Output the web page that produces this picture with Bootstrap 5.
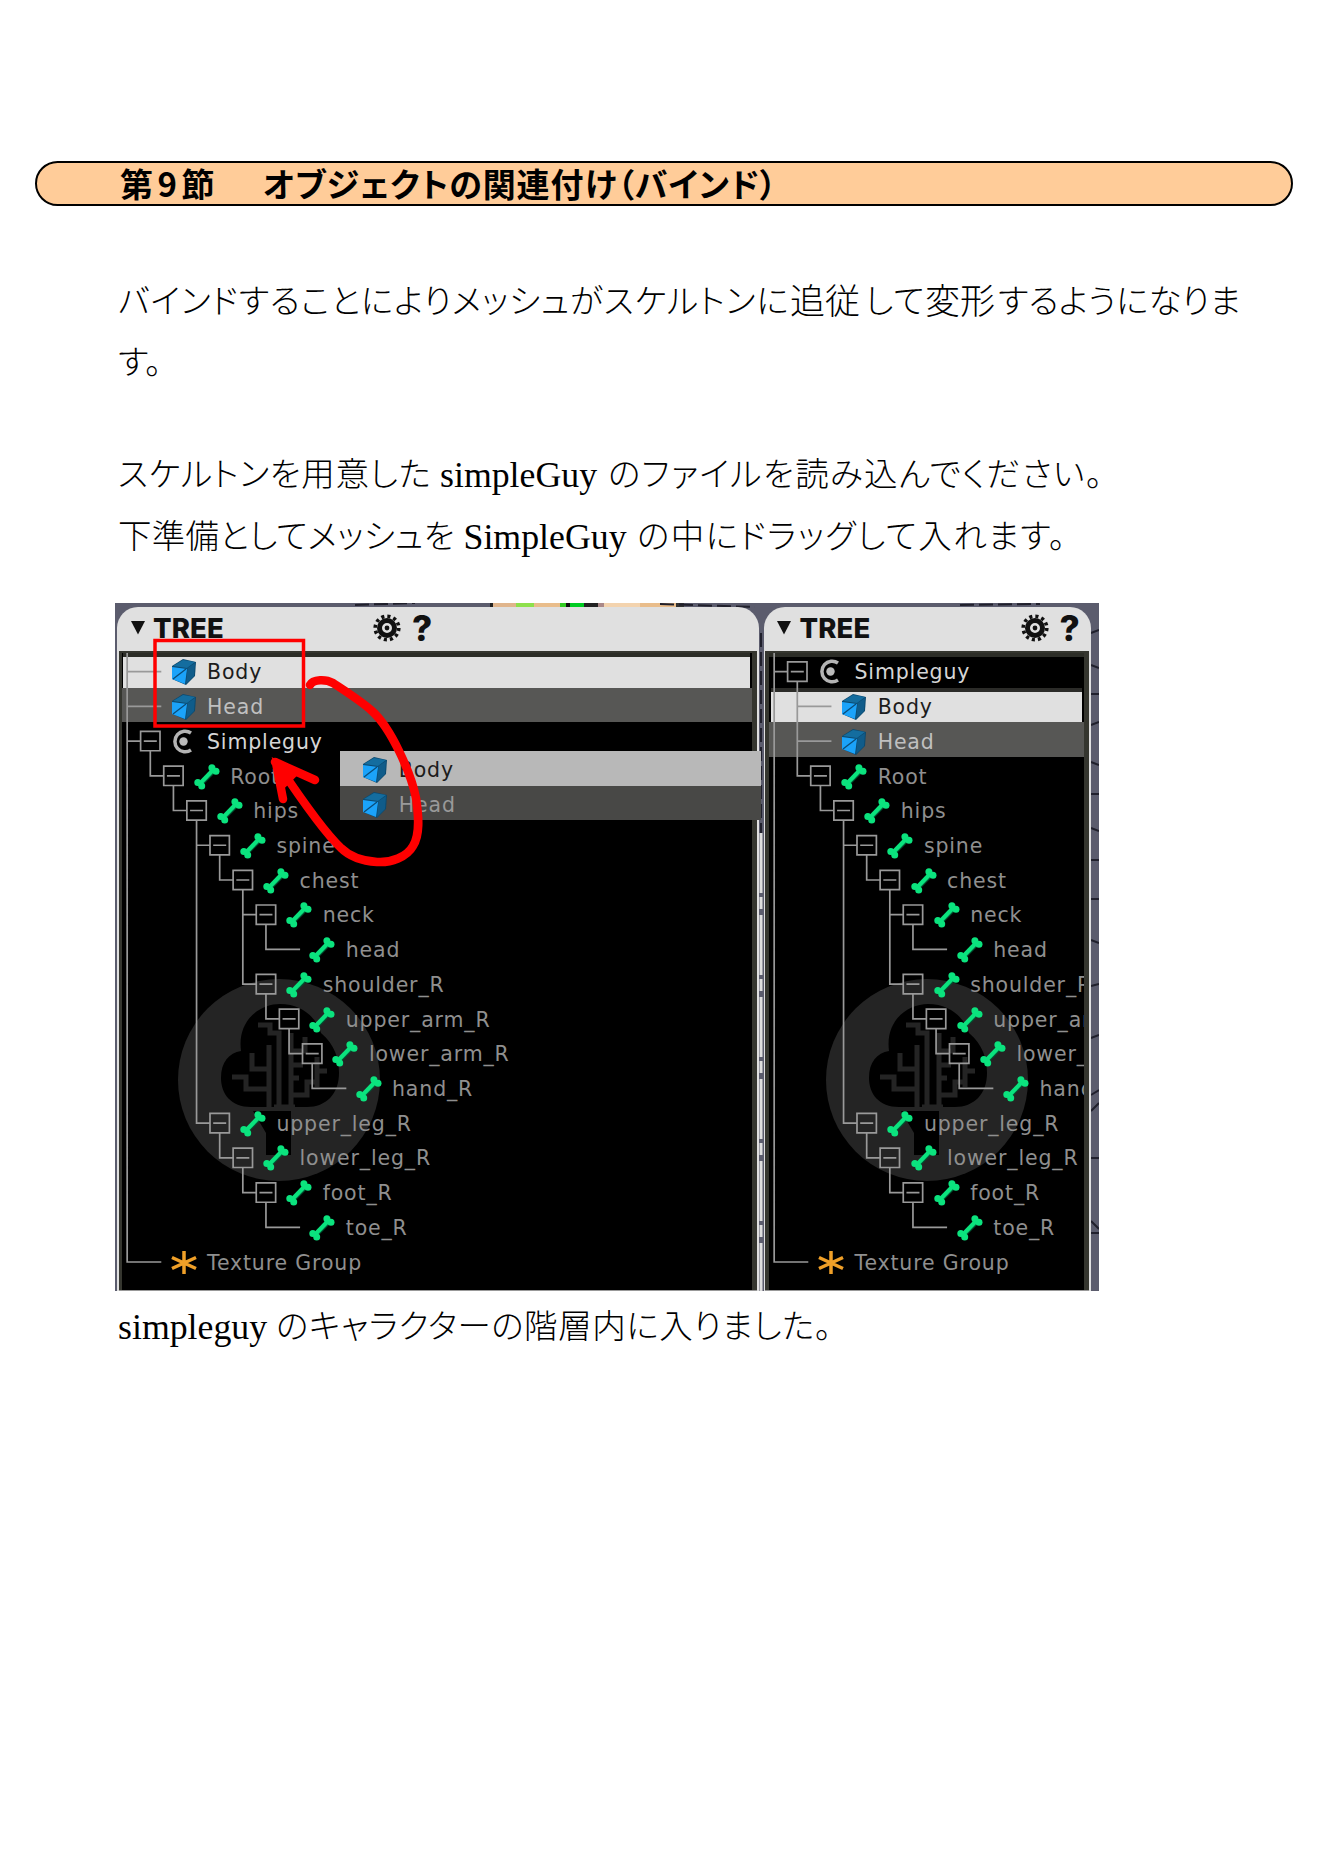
<!DOCTYPE html>
<html lang="ja">
<head>
<meta charset="utf-8">
<meta name="viewport" content="width=device-width, initial-scale=1">
<title>第9節 オブジェクトの関連付け（バインド）</title>
<link href="https://cdn.jsdelivr.net/npm/bootstrap@5.3.0/dist/css/bootstrap.min.css" rel="stylesheet">
<style>
  body { background:#fff; color:#000; width:1328px; height:1875px; overflow:hidden; }
  .sheet { padding-top:161px; }
  .section-bar { margin-left:35px; width:1258px; height:45px; border:2px solid #000; border-radius:23px; background:#fc9;
    padding-left:83px; font:700 33px/40px "Noto Sans CJK JP",sans-serif; font-feature-settings:"palt"; }
  .prose { padding-left:118px; }
  .txt-line { height:61.5px; font:300 33.5px/56.5px "Noto Sans CJK JP",sans-serif; font-feature-settings:"palt"; white-space:nowrap; }
  .seg { text-align:justify; text-align-last:justify; flex:none; letter-spacing:-1.5px; }
  .kj { font-size:35px; letter-spacing:0; font-feature-settings:normal; text-align-last:left; }
  .lat { font:35.8px/63.5px "Liberation Serif",serif; flex:none; }
  .shot { margin-left:115px; width:984px; height:688px; padding:4px 0 0 2px; overflow:hidden; background:#5b5c6d; position:relative; }
  .shot-top { left:375px; top:0; width:194px; height:5px; background:linear-gradient(90deg,#222 0 3px,#e0b58c 3px 26px,#8ee04c 26px 44px,#e9bd8b 44px 70px,#3c2 70px 76px,#111 76px 80px,#0c2 80px 94px,#222 94px 108px,#a88 108px 114px,#f3d3ae 114px 150px,#e9bd8b 150px 186px,#333 186px); }
  .shot-noise { left:0; top:0; }
  .panel { height:684px; border-radius:21px 21px 0 0; background:#e0e0e0; position:relative; flex:none; }
  .panel-a { width:642px; } .panel-b { width:327.5px; margin-left:4.5px; }
  .panel-head { height:44px; padding-left:13.5px; padding-bottom:2px; }
  .panel-title { font:800 27.5px/42px Inter,sans-serif; letter-spacing:.1px; color:#111; margin-left:8.5px; width:220px; flex:none; }
  .panel-b .panel-title { width:auto; flex:1 1 auto; }
  .qmark { font:800 35px/44px Inter,sans-serif; color:#111; margin-left:11px; width:26px; }
  .well { background:#35362f; height:640px; padding:2px 5px 0 3px; margin:0 2px 0 1.5px; border-bottom:1px solid #999; }
  .panel-b .well { padding-left:4px; }
  .tree { background:#000; height:637px; overflow:hidden; position:relative; }
  .wires, .logo { position:absolute; left:0; top:0; }
  .wires { z-index:2; }
  .node { height:34.73px; border-top:4px solid transparent; position:relative; z-index:1; font:20.5px/30px "DejaVu Sans",sans-serif; letter-spacing:.85px; color:#8f8f8f; white-space:nowrap; }
  .node svg { width:28px; height:28px; flex:none; margin-right:9.5px; overflow:visible; }
  .node:first-of-type { border-top-color:#2c2d27; }
  .on { background:#e0e0e0; color:#1c1c1c; border-top-color:#2b2b28; margin:0 2.5px 0 1.5px; padding-right:0; }
  .on svg { margin-left:-1.5px; margin-right:9.5px; }
  .on2 { background:#575755; border-top-color:#575755; color:#c0c0c0; }
  .bright { color:#d6d6d6; }
  .ghost { position:absolute; left:223px; top:144px; width:421px; z-index:4; }
  .ghost .node { padding-left:21.3px; }
  .ghost .on { margin:0; background:#b8b8b8; border-top-color:#b8b8b8; }
  .ghost .on svg { margin-left:0; }
  .ghost .on2 { background:#484846; border-top-color:#484846; color:#999; }
  .marks { position:absolute; left:0; top:0; z-index:5; }
</style>
<script src="https://cdn.jsdelivr.net/npm/bootstrap@5.3.0/dist/js/bootstrap.bundle.min.js"></script>
</head>
<body>
<svg width="0" height="0" class="position-absolute">
  <symbol id="cube" viewBox="0 0 28 28"><path d="M2 8L13 1 26 4 25 18 16 27 2 21Z" fill="#0c4a70"/><path d="M3 8L13 2 25 4 17 10Z" fill="#146d9f"/><path d="M17.500 10L25 5 24 18 16 26Z" fill="#105c8a"/><path d="M2 9L17 11 15 26 2 21Z" fill="#1ba3fa"/><path d="M3 21L16 11" stroke="#0b4c78" stroke-width="1.300"/></symbol>
  <symbol id="bone" viewBox="0 0 28 28"><g transform="translate(1 1)" fill="#053" stroke="#053"><path d="M7 20L20 7" stroke-width="4"/></g><g fill="#0be37e" stroke="#0be37e"><path d="M7 20.500L20 7" stroke-width="4.200"/><g stroke="none"><circle cx="4.800" cy="19.500" r="3.500"/><circle cx="8.700" cy="23" r="3.500"/><circle cx="18.900" cy="4.800" r="3.500"/><circle cx="23" cy="8.300" r="3.500"/></g></g></symbol>
  <symbol id="cee" viewBox="0 0 28 28"><path d="M22.500 5A10.300 10.300 0 1 0 22.500 22" fill="none" stroke="#b4b4b4" stroke-width="3.500" transform="translate(-1.500 0)"/><circle cx="13.500" cy="13.500" r="4.200" fill="#bbb"/></symbol>
  <symbol id="star" viewBox="0 0 28 28"><path d="M14 2V25M2 8.500L26 19.500M26 8.500L2 19.500" stroke="#f0a028" stroke-width="3.500"/></symbol>
  <symbol id="gear" viewBox="0 0 28 28"><circle cx="14" cy="14" r="7.500" fill="none" stroke="#111" stroke-width="5"/><circle cx="14" cy="14" r="11.800" fill="none" stroke="#111" stroke-width="3.600" stroke-dasharray="3.100 3.078"/><circle cx="14" cy="14" r="2.400" fill="#111"/></symbol>
  <symbol id="brain" viewBox="0 0 210 210"><circle cx="104" cy="105" r="101" fill="#242424"/>
    <path d="M66 76C62 45 85 29 105 29C128 29 142 44 146 58C160 70 164 84 164 98C164 119 151 132 132 132H76C56 132 46 119 46 103C46 87 54 78 66 76Z" fill="#000"/>
    <path d="M116 136V180H91V158L78 136Z" fill="#000"/>
    <g fill="none" stroke="#242424" stroke-width="5"><path d="M83 50H95V58H104V132M94 70V132M77 78V94H94M57 102H71V114H94M116 58V132M116 76H130V62M116 90H128M116 103H124M116 120H132V107H142M142 82V112M142 96H152M99 132H120"/></g></symbol>
</svg>

<main class="sheet">
  <h1 class="section-bar d-flex mb-0"><span class="seg" style="width:93px">第9節</span><span class="seg" style="width:512px;margin-left:50px">オブジェクトの関連付け（バインド）</span></h1>

  <div class="prose" style="padding-top:64.5px">
    <p class="txt-line d-flex mb-0"><span class="seg" style="width:669px">バインドすることによりメッシュがスケルトンに</span><span class="seg kj" style="width:71px;margin-left:3px">追従</span><span class="seg" style="width:58px;margin-left:4px">して</span><span class="seg kj" style="width:71px;margin-left:2px">変形</span><span class="seg" style="width:241px;margin-left:2px">するようになりま</span></p>
    <p class="txt-line d-flex mb-0"><span>す。</span></p>
  </div>

  <div class="prose" style="padding-top:50.5px">
    <p class="txt-line d-flex mb-0"><span class="seg" style="width:311px">スケルトンを用意した</span><span class="lat" style="width:158px;margin-left:11px">simpleGuy</span><span class="seg" style="width:493px;margin-left:10px">のファイルを読み込んでください。</span></p>
    <p class="txt-line d-flex mb-0"><span class="seg" style="width:335px">下準備としてメッシュを</span><span class="lat" style="width:163px;margin-left:10.5px">SimpleGuy</span><span class="seg" style="width:427px;margin-left:10.5px">の中にドラッグして入れます。</span></p>
  </div>

  <figure class="shot d-flex mb-0" style="margin-top:36px">
    <div class="shot-top position-absolute"></div>
    <svg class="shot-noise position-absolute" width="984" height="688" fill="none" stroke="#20202c" stroke-width="2">
      <path d="M240 2L300 0M545 1L640 4M845 2L925 1M646 30V230" stroke-dasharray="14 5"/>
      <path d="M646 230V688" stroke="#ddd" stroke-width="3" stroke-dasharray="60 4 12 6"/>
      <path d="M976 30L984 27M976 62L984 65M976 91H984M976 122L984 119M976 159L984 162M976 191H984M976 225L984 228M976 257H984M976 296H984M976 337L984 340M976 383L984 381M976 435L984 432M976 492L984 487M976 508L984 500M976 555H984M976 618L984 626M976 630H984"/>
    </svg>
    <section class="panel panel-a">
      <header class="panel-head d-flex align-items-center">
        <svg width="14" height="14"><path d="M0 0H14L7 13.500Z" fill="#111"/></svg>
        <span class="panel-title">TREE</span>
        <svg width="28" height="28"><use href="#gear"/></svg><span class="qmark">?</span>
      </header>
      <div class="well"><div class="tree" id="treeA"></div></div>
      <div class="ghost">
        <div class="node on d-flex align-items-center" style="margin:0"><svg><use href="#cube"/></svg>Body</div>
        <div class="node on2 d-flex align-items-center"><svg><use href="#cube"/></svg>Head</div>
      </div>
    </section>
    <section class="panel panel-b">
      <header class="panel-head d-flex align-items-center">
        <svg width="14" height="14"><path d="M0 0H14L7 13.500Z" fill="#111"/></svg>
        <span class="panel-title">TREE</span>
        <svg width="28" height="28"><use href="#gear"/></svg><span class="qmark" style="margin-right:5.5px">?</span>
      </header>
      <div class="well"><div class="tree" id="treeB"></div></div>
    </section>
    <svg class="marks" width="984" height="688" fill="none" stroke="#f00">
      <rect x="40" y="37.500" width="148.500" height="85.500" stroke-width="3.500"/>
      <path d="M195 82C198 76 211 76 218 80C227 86 246 98 257 108C276 125 296 170 301 195C304 215 305 232 298 243C292 254 276 260 262 259C247 258 235 254 226 245C208 228 182 190 164 163M160 159L200 177M161 160L168 196" stroke-width="8.500" stroke-linecap="round" stroke-linejoin="round"/>
      <path d="M160 158L182 170L168 184Z" fill="#f00" stroke-width="4"/>
    </svg>
  </figure>

  <div class="prose" style="padding-top:4.500px">
    <p class="txt-line d-flex mb-0"><span class="lat" style="width:150px">simpleguy</span><span class="seg" style="width:554px;margin-left:8px">のキャラクターの階層内に入りました。</span></p>
  </div>
</main>

<script>
// Each node: [label, depth, icon, has children, extra class]
const bones = [
  ['Root',1,'bone',1],['hips',2,'bone',1],['spine',3,'bone',1],['chest',4,'bone',1],['neck',5,'bone',1],['head',6,'bone',0],
  ['shoulder_R',5,'bone',1],['upper_arm_R',6,'bone',1],['lower_arm_R',7,'bone',1],['hand_R',8,'bone',0],
  ['upper_leg_R',3,'bone',1],['lower_leg_R',4,'bone',1],['foot_R',5,'bone',1],['toe_R',6,'bone',0],['Texture Group',0,'star',0]];
const before = [['Body',0,'cube',0,'on'],['Head',0,'cube',0,'on2'],['Simpleguy',0,'cee',1,'bright'],...bones];
const after = [['Simpleguy',0,'cee',1,'bright'],['Body',1,'cube',0,'on'],['Head',1,'cube',0,'on2'],...bones];
const H = 34.73, STEP = 23.13;
function draw(id, rows) {
  const x = d => 28.3 + d * STEP, y = i => i * H + 18.6;
  let wires = '', html = '';
  rows.forEach(([label, d, icon, open, cls], i) => {
    let p = i - 1;
    while (p >= 0 && rows[p][1] > d) p--;
    const top = p < 0 ? 0 : rows[p][1] < d ? y(p) + 10 : y(p);
    const lx = x(d) - STEP;
    wires += `M${lx} ${top}V${y(i)}H${open ? x(d) - 10 : x(d) + 11}`;
    if (open) wires += `M${x(d)-9.7} ${y(i)-9.7}h19.4v19.4h-19.4zM${x(d)-6.5} ${y(i)}h13`;
    html += `<div class="node d-flex align-items-center ${cls || ''}" style="padding-left:${48 + d * STEP}px"><svg><use href="#${icon}"/></svg>${label}</div>`;
  });
  document.getElementById(id).innerHTML =
    `<svg class="logo" width="210" height="210" style="left:53.500px;top:321.500px"><use href="#brain"/></svg>${html}` +
    `<svg class="wires" width="630" height="637"><path d="${wires}" fill="none" stroke="#999" stroke-width="1.700"/></svg>`;
}
draw('treeA', before);
draw('treeB', after);
</script>
</body>
</html>
